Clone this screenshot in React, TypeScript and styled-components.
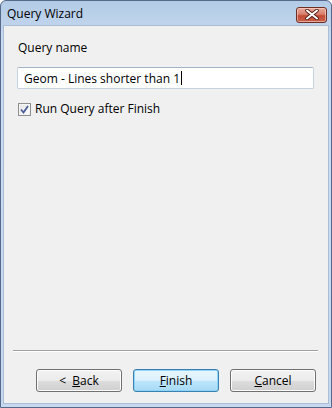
import React from "react";
import styled, { createGlobalStyle } from "styled-components";

const Global = createGlobalStyle`
  html, body { margin: 0; padding: 0; background: #ffffff; }
  body { font-family: "Open Sans", "Noto Sans", sans-serif; }
  * { box-sizing: border-box; }
`;

const Window = styled.div`
  width: 332px;
  height: 408px;
  display: flex;
  flex-direction: column;
  background: linear-gradient(#b3cbe6, #c8dbf0 40px, #c6d9ee);
  border: 1px solid #56698a;
  border-radius: 6px 6px 0 0;
  overflow: hidden;
`;

const TitleBar = styled.div`
  height: 24px;
  flex: none;
  display: flex;
  align-items: center;
  justify-content: space-between;
  padding: 0 4px 0 6px;
`;

const Title = styled.span`
  font-size: 12px;
  color: #000;
  line-height: 16px;
  margin-top: 1px;
`;

const CloseButton = styled.div`
  width: 31px;
  height: 16px;
  margin-top: 3px;
  border: 1px solid #6e2e25;
  border-radius: 3px;
  background: linear-gradient(#e9a99b 0%, #d7806c 45%, #c24c35 55%, #c8614a 100%);
  box-shadow: inset 0 0 0 1px rgba(255, 220, 210, 0.55);
  display: flex;
  align-items: center;
  justify-content: center;
`;

const Frame = styled.div`
  flex: 1;
  margin: 0 2px 3px 2px;
  border: 1px solid #a9bdd6;
  background: #f0f0f0;
  display: flex;
  flex-direction: column;
`;

const Content = styled.div`
  padding: 14px 14px 0 13px;
  display: flex;
  flex-direction: column;
`;

const Label = styled.div`
  font-size: 12px;
  line-height: 16px;
  color: #000;
  padding-left: 1px;
`;

const TextBox = styled.div`
  margin-top: 11px;
  height: 22px;
  border: 1px solid #c3d1e0;
  border-top-color: #a3b4c8;
  border-radius: 2px;
  background: #fff;
  display: flex;
  align-items: center;
  padding-left: 6px;
  font-size: 12px;
  color: #000;
`;

const Caret = styled.span`
  display: inline-block;
  width: 1px;
  height: 14px;
  background: #000;
  margin-left: 1px;
`;

const CheckRow = styled.label`
  margin-top: 12px;
  padding-left: 1px;
  display: flex;
  align-items: center;
  gap: 4px;
  font-size: 12px;
  line-height: 16px;
  color: #000;
`;

const CheckBox = styled.span`
  width: 13px;
  height: 13px;
  border: 1px solid #8e8f8f;
  background: linear-gradient(135deg, #e4e4e4, #fdfdfd);
  box-shadow: inset 0 0 0 1px #f4f4f4;
  display: flex;
  align-items: center;
  justify-content: center;
`;

const Spacer = styled.div`
  flex: 1;
`;

const Separator = styled.div`
  margin: 0 10px 0 9px;
  height: 2px;
  border-top: 1px solid #a0a0a0;
  border-bottom: 1px solid #ffffff;
`;

const ButtonRow = styled.div`
  display: flex;
  padding: 17px 9px 11px 32px;
  gap: 11px;
`;

const Button = styled.div<{ $default?: boolean }>`
  width: 86px;
  height: 23px;
  border-radius: 3px;
  border: 1px solid ${(p) => (p.$default ? "#3c7fb1" : "#707070")};
  background: ${(p) =>
    p.$default
      ? "linear-gradient(#eaf6fd 0%, #d9f0fc 50%, #bee6fd 51%, #a7d9f5 100%)"
      : "linear-gradient(#f2f2f2 0%, #ebebeb 50%, #dddddd 51%, #cfcfcf 100%)"};
  box-shadow: inset 0 0 0 1px ${(p) => (p.$default ? "#8bd5f6" : "#fcfcfc")};
  display: flex;
  align-items: center;
  justify-content: center;
  font-size: 12px;
  color: #000;
  white-space: pre;
`;

const U = styled.span`
  text-decoration: underline;
`;

export default function App() {
  return (
    <>
      <Global />
      <Window>
        <TitleBar>
          <Title>Query Wizard</Title>
          <CloseButton>
            <svg width="14" height="11" viewBox="0 0 14 11">
              <path
                d="M2 1.5 L12 9.5 M12 1.5 L2 9.5"
                stroke="#4a1a12"
                strokeWidth="3.6"
                strokeLinecap="round"
              />
              <path
                d="M2 1.5 L12 9.5 M12 1.5 L2 9.5"
                stroke="#ffffff"
                strokeWidth="2"
                strokeLinecap="round"
              />
            </svg>
          </CloseButton>
        </TitleBar>
        <Frame>
          <Content>
            <Label>Query name</Label>
            <TextBox>
              Geom - Lines shorter than 1<Caret />
            </TextBox>
            <CheckRow>
              <CheckBox>
                <svg width="9" height="9" viewBox="0 0 9 9">
                  <path
                    d="M1 4.5 L3.5 7.5 L8 1"
                    fill="none"
                    stroke="#4a5f97"
                    strokeWidth="1.8"
                  />
                </svg>
              </CheckBox>
              Run Query after Finish
            </CheckRow>
          </Content>
          <Spacer />
          <Separator />
          <ButtonRow>
            <Button>
              {"<  "}
              <U>B</U>ack
            </Button>
            <Button $default>
              <U>F</U>inish
            </Button>
            <Button>
              <U>C</U>ancel
            </Button>
          </ButtonRow>
        </Frame>
      </Window>
    </>
  );
}
